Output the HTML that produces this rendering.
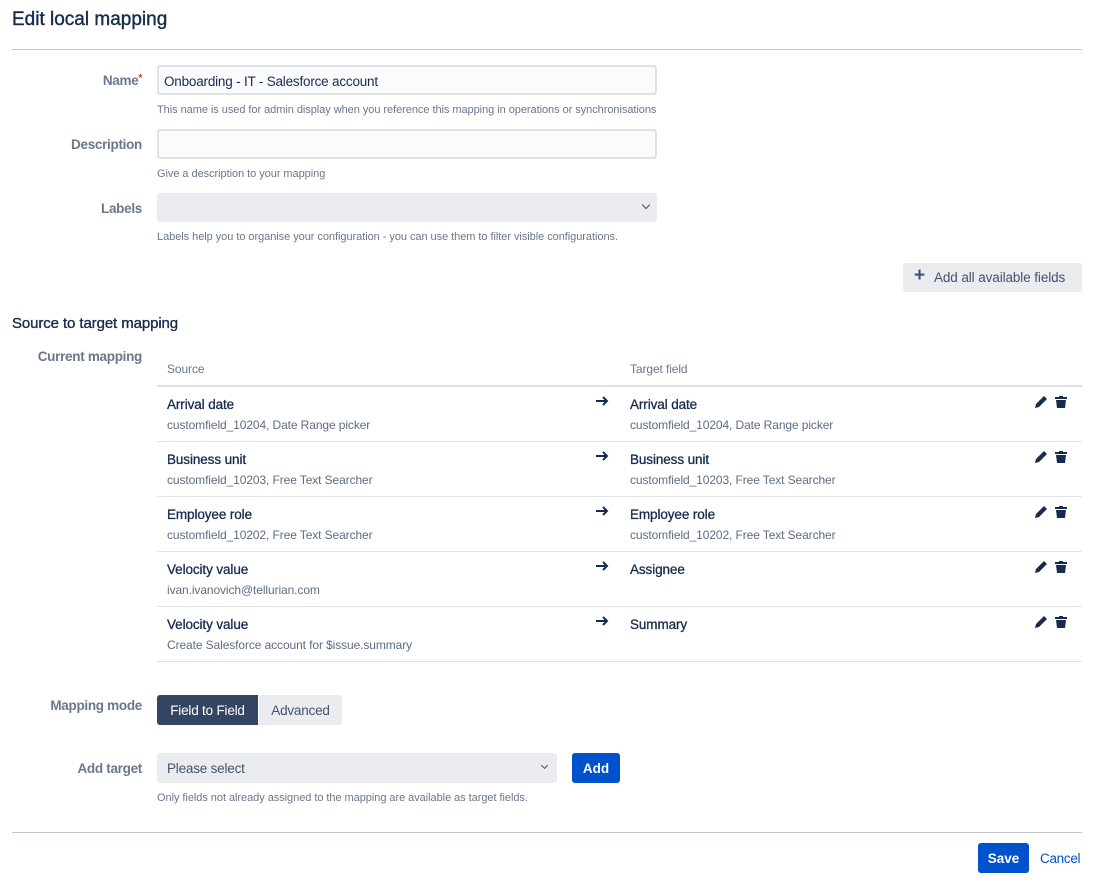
<!DOCTYPE html>
<html><head><meta charset="utf-8"><style>
*{margin:0;padding:0;box-sizing:border-box}
body{width:1101px;height:887px;background:#fff;font-family:"Liberation Sans",sans-serif;color:#172b4d;position:relative;overflow:hidden}
.a{position:absolute;white-space:nowrap}
.lbl{position:absolute;right:959px;font-size:13.5px;color:#6b778c;font-weight:bold;letter-spacing:-0.3px}
.help{position:absolute;left:157px;font-size:11px;color:#6b778c;letter-spacing:-0.05px}
.inp{position:absolute;left:157px;width:500px;height:30px;border:2px solid #dfe1e6;border-radius:3px;background:#fafbfc}
.sel{position:absolute;background:#ebecf0;border-radius:3px}
.hr{position:absolute;left:12px;width:1070px;height:1px;background:#c1c7d0}
.rb{position:absolute;left:157px;width:925px;height:1px;background:#dfe1e6}
.t{position:absolute;font-size:13.5px;color:#172b4d;letter-spacing:-0.1px;-webkit-text-stroke:0.3px #172b4d}
.s{position:absolute;font-size:12px;color:#5e6c84;letter-spacing:-0.1px}
.chev{position:absolute;width:6px;height:6px;border-right:1.8px solid #42526e;border-bottom:1.8px solid #42526e;transform:rotate(45deg)}
</style></head><body>
<div class="a" style="left:12px;top:9px;font-size:19px;-webkit-text-stroke:0.4px #172b4d">Edit local mapping</div>
<div class="hr" style="top:49px"></div>

<div class="lbl" style="top:73px">Name<span style="color:#de350b;font-size:10px;vertical-align:top">*</span></div>
<div class="inp" style="top:65px"><span class="a" style="left:5px;top:7px;font-size:13.5px;letter-spacing:-0.2px">Onboarding - IT - Salesforce account</span></div>
<div class="help" style="top:104px">This name is used for admin display when you reference this mapping in operations or synchronisations</div>

<div class="lbl" style="top:137px">Description</div>
<div class="inp" style="top:129px"></div>
<div class="help" style="top:168px">Give a description to your mapping</div>

<div class="lbl" style="top:201px">Labels</div>
<div class="sel" style="left:157px;top:193px;width:500px;height:29px"><div class="chev" style="left:486px;top:9px"></div></div>
<div class="help" style="top:231px">Labels help you to organise your configuration - you can use them to filter visible configurations.</div>

<div class="sel" style="left:903px;top:263px;width:179px;height:29px"><span class="a" style="left:11px;top:2px;font-size:19px;color:#42526e;font-weight:bold">+</span><span class="a" style="left:31px;top:7px;font-size:13.5px;color:#42526e;letter-spacing:-0.1px">Add all available fields</span></div>

<div class="a" style="left:12px;top:315px;font-size:15px;letter-spacing:-0.1px;-webkit-text-stroke:0.35px #172b4d">Source to target mapping</div>
<div class="lbl" style="top:349px">Current mapping</div>

<div class="s" style="left:167px;top:362px;color:#6b778c">Source</div>
<div class="s" style="left:630px;top:362px;color:#6b778c">Target field</div>
<div class="rb" style="top:385px;height:2px"></div>

<div id="rows"></div>

<div class="lbl" style="top:698px">Mapping mode</div>
<div class="a" style="left:157px;top:695px;width:101px;height:30px;background:#344563;border-radius:3px 0 0 3px;color:#fff;font-size:13.5px;text-align:center;line-height:31px;letter-spacing:-0.2px">Field to Field</div>
<div class="a" style="left:259px;top:695px;width:83px;height:30px;background:#ebecf0;border-radius:0 3px 3px 0;color:#42526e;font-size:13.5px;text-align:center;line-height:31px;letter-spacing:-0.2px">Advanced</div>

<div class="lbl" style="top:761px">Add target</div>
<div class="sel" style="left:157px;top:753px;width:400px;height:30px"><span class="a" style="left:10px;top:8px;font-size:13.5px;color:#42526e;letter-spacing:-0.2px">Please select</span><div class="chev" style="left:385px;top:10px;width:5px;height:5px"></div></div>
<div class="a" style="left:572px;top:753px;width:48px;height:30px;background:#0052cc;border-radius:3px;color:#fff;font-size:13.5px;font-weight:bold;text-align:center;line-height:31px">Add</div>
<div class="help" style="top:792px">Only fields not already assigned to the mapping are available as target fields.</div>

<div class="hr" style="top:832px"></div>
<div class="a" style="left:978px;top:843px;width:51px;height:30px;background:#0052cc;border-radius:3px;color:#fff;font-size:13.5px;font-weight:bold;text-align:center;line-height:31px">Save</div>
<div class="a" style="left:1040px;top:851px;font-size:13.5px;color:#0052cc;letter-spacing:-0.3px">Cancel</div>

<script>
var rows=[["Arrival date","customfield_10204, Date Range picker","Arrival date","customfield_10204, Date Range picker"],
["Business unit","customfield_10203, Free Text Searcher","Business unit","customfield_10203, Free Text Searcher"],
["Employee role","customfield_10202, Free Text Searcher","Employee role","customfield_10202, Free Text Searcher"],
["Velocity value","ivan.ivanovich@tellurian.com","Assignee",""],
["Velocity value","Create Salesforce account for $issue.summary","Summary",""]];
var h="";
rows.forEach(function(r,i){var y=387+i*55;
h+='<div class="t" style="left:167px;top:'+(y+10)+'px">'+r[0]+'</div>';
h+='<div class="s" style="left:167px;top:'+(y+31)+'px">'+r[1]+'</div>';
h+='<div class="t" style="left:630px;top:'+(y+10)+'px">'+r[2]+'</div>';
if(r[3])h+='<div class="s" style="left:630px;top:'+(y+31)+'px">'+r[3]+'</div>';
h+='<svg class="a" style="left:594px;top:'+(y+8)+'px" width="16" height="12" viewBox="0 0 16 12"><path d="M2 6H13M9 2L13 6L9 10" stroke="#172b4d" stroke-width="2" fill="none"/></svg>';
h+='<svg class="a" style="left:1034px;top:'+(y+8)+'px" width="36" height="14" viewBox="0 0 36 14"><path d="M1 13L2 9L10 1L13 4L5 12Z" fill="#172b4d"/><path d="M21 2H33V4H21Z" fill="#172b4d"/><path d="M25 1H29V2H25Z" fill="#172b4d"/><path d="M22 5H32L31 13H23Z" fill="#172b4d"/></svg>';
h+='<div class="rb" style="top:'+(y+54)+'px"></div>';});
document.getElementById("rows").innerHTML=h;
</script>
</body></html>
